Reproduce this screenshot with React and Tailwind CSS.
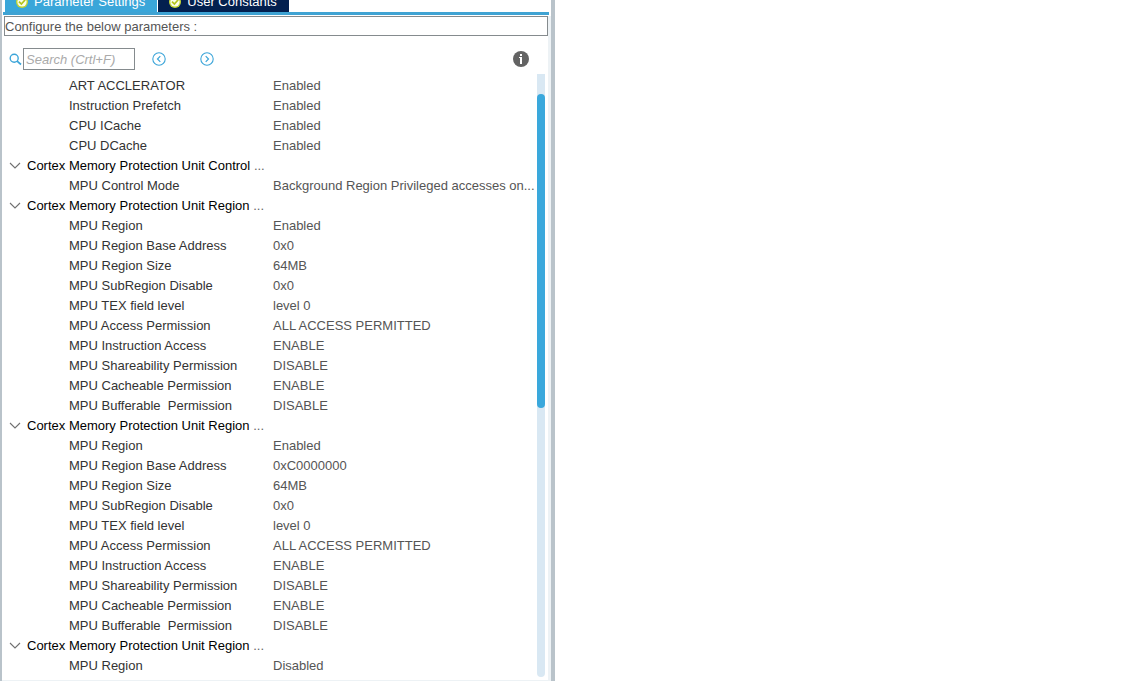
import React from "react";

const regionRows = (base) => [
  ["MPU Region", "Enabled"],
  ["MPU Region Base Address", base],
  ["MPU Region Size", "64MB"],
  ["MPU SubRegion Disable", "0x0"],
  ["MPU TEX field level", "level 0"],
  ["MPU Access Permission", "ALL ACCESS PERMITTED"],
  ["MPU Instruction Access", "ENABLE"],
  ["MPU Shareability Permission", "DISABLE"],
  ["MPU Cacheable Permission", "ENABLE"],
  ["MPU Bufferable  Permission", "DISABLE"],
];

const groups = [
  {
    title: null,
    rows: [
      ["ART ACCLERATOR", "Enabled"],
      ["Instruction Prefetch", "Enabled"],
      ["CPU ICache", "Enabled"],
      ["CPU DCache", "Enabled"],
    ],
  },
  {
    title: "Cortex Memory Protection Unit Control",
    rows: [["MPU Control Mode", "Background Region Privileged accesses on..."]],
  },
  { title: "Cortex Memory Protection Unit Region", rows: regionRows("0x0") },
  { title: "Cortex Memory Protection Unit Region", rows: regionRows("0xC0000000") },
  { title: "Cortex Memory Protection Unit Region", rows: [["MPU Region", "Disabled"]] },
];

function CheckBadge() {
  return (
    <svg viewBox="0 0 12 12" className="size-3 shrink-0" aria-hidden="true">
      <circle cx="6" cy="6" r="6" fill="#c3d433" />
      <circle cx="6" cy="6" r="4.6" fill="#fbfde8" />
      <path d="M3 5.6 L5.4 8 L9.2 3.8" fill="none" stroke="#b4c41c" strokeWidth="1.7" />
    </svg>
  );
}

function Tab({ label, active }) {
  return (
    <button
      type="button"
      role="tab"
      aria-selected={active}
      className={
        "flex h-5 items-center gap-1.5 pr-3 pl-[11px] text-[13px] leading-5 whitespace-nowrap text-white " +
        (active ? "bg-[#3aa6d9]" : "bg-[#03204f]")
      }
    >
      <CheckBadge />
      {label}
    </button>
  );
}

function StepButton({ label, d }) {
  return (
    <button type="button" aria-label={label} className="size-3.5">
      <svg viewBox="0 0 14 14" className="size-3.5" fill="none" stroke="#3ca5d9">
        <circle cx="7" cy="7" r="6.2" strokeWidth="1.1" />
        <path d={d} strokeWidth="1.2" />
      </svg>
    </button>
  );
}

function GroupRow({ title }) {
  return (
    <tr className="h-5">
      <th scope="rowgroup" colSpan={2} className="p-0 text-left font-normal text-black">
        <button type="button" aria-expanded="true" className="flex h-5 items-center gap-1.5 pl-[5px]">
          <svg viewBox="0 0 12 8" className="h-2 w-3" fill="none" stroke="#707070" aria-hidden="true">
            <path d="M1 1 L6 6 L11 1" strokeWidth="1.1" />
          </svg>
          <span>
            {title} <span className="text-[#666]">...</span>
          </span>
        </button>
      </th>
    </tr>
  );
}

export default function App() {
  return (
    <div className="h-screen overflow-hidden bg-white font-['Liberation_Sans',Arial,sans-serif] text-[13px] leading-5">
      <main className="flex h-full w-[555px] max-w-full flex-col border-r-4 border-l-2 border-[#b9c3ca] bg-white">
        <div role="tablist" className="flex h-3 shrink-0 items-end gap-px overflow-hidden pl-[3px]">
          <Tab label="Parameter Settings" active />
          <Tab label="User Constants" active={false} />
        </div>
        <div className="mr-0.5 mb-px ml-px h-[3px] shrink-0 bg-[#3fa3d3]" />

        <div className="flex min-h-0 grow flex-col border-r-3 border-b border-[#edf2f5] pl-0.5">
          <p className="h-5 shrink-0 border border-[#858b8e] leading-5 text-[#555]">
            Configure the below parameters :
          </p>

          <div className="flex h-[38px] shrink-0 items-center pt-2 pr-[19px] pl-[5px]">
            <svg viewBox="0 0 13 13" className="mr-px size-[13px]" fill="none" stroke="#3ca5d9" aria-hidden="true">
              <circle cx="5.2" cy="5.2" r="4" strokeWidth="1.4" />
              <path d="M8.1 8.1 L12 11.5" strokeWidth="1.7" />
            </svg>
            <input
              type="text"
              aria-label="Search"
              placeholder="Search (Crtl+F)"
              className="h-[22px] w-28 border border-[#858b8e] px-0.5 text-[13px] italic outline-none placeholder:text-[#aaa]"
            />
            <div className="ml-[17px] flex gap-[34px]">
              <StepButton label="Previous" d="M8.3 4.2 L5.5 7 L8.3 9.8" />
              <StepButton label="Next" d="M5.7 4.2 L8.5 7 L5.7 9.8" />
            </div>
            <button type="button" aria-label="Information" className="ml-auto size-4">
              <svg viewBox="0 0 16 16" className="size-4">
                <circle cx="8" cy="8" r="8" fill="#636363" />
                <path d="M7 3h2v2H7zM6 6h3v7H7V7H6z" fill="#fff" />
              </svg>
            </button>
          </div>

          <div className="flex min-h-0 grow pr-[3px] pb-[3px]">
            <div className="min-w-0 grow overflow-hidden pt-0.5">
              <table className="w-full table-fixed border-collapse">
                <colgroup>
                  <col className="w-[269px]" />
                  <col />
                </colgroup>
                {groups.map((group, i) => (
                  <tbody key={i}>
                    {group.title && <GroupRow title={group.title} />}
                    {group.rows.map(([name, value]) => (
                      <tr key={name} className="h-5">
                        <th scope="row" className="p-0 pl-[65px] text-left font-normal whitespace-pre text-[#333]">
                          {name}
                        </th>
                        <td className="p-0 whitespace-nowrap text-[#555]">{value}</td>
                      </tr>
                    ))}
                  </tbody>
                ))}
              </table>
            </div>
            <div className="flex w-2 shrink-0 flex-col rounded-b-full bg-[#d9e8f3]">
              <div className="mt-5 h-[52%] rounded-full bg-[#3aa8dc]" />
            </div>
          </div>
        </div>
      </main>
    </div>
  );
}
